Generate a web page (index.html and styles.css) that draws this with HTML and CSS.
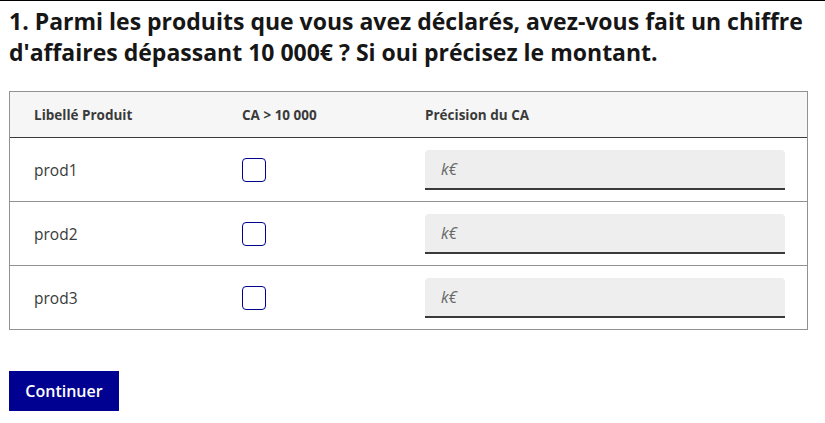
FILE: index.html
```html
<!DOCTYPE html>
<html lang="fr">
<head>
    <meta charset="UTF-8">
    <meta name="viewport" content="width=device-width, initial-scale=1.0">
    <title>Déclaration du chiffre d'affaires</title>
    <link rel="stylesheet" href="styles.css">
</head>
<body>
    <div class="page">
        <h1 class="question">1. Parmi les produits que vous avez déclarés, avez-vous fait un chiffre d'affaires dépassant 10 000€ ? Si oui précisez le montant.</h1>

        <div class="table-wrap">
            <table class="ca-table">
                <thead>
                    <tr>
                        <th class="col-name">Libellé Produit</th>
                        <th class="col-check">CA &gt; 10 000</th>
                        <th>Précision du CA</th>
                    </tr>
                </thead>
                <tbody>
                    <tr>
                        <td>prod1</td>
                        <td><input type="checkbox" class="check"></td>
                        <td><input type="text" class="amount" placeholder="k€"></td>
                    </tr>
                    <tr>
                        <td>prod2</td>
                        <td><input type="checkbox" class="check"></td>
                        <td><input type="text" class="amount" placeholder="k€"></td>
                    </tr>
                    <tr>
                        <td>prod3</td>
                        <td><input type="checkbox" class="check"></td>
                        <td><input type="text" class="amount" placeholder="k€"></td>
                    </tr>
                </tbody>
            </table>
        </div>

        <button type="submit" class="btn-primary">Continuer</button>
    </div>
</body>
</html>
```

FILE: styles.css
```css
body {
    margin: 0;
    padding: 0;
    font-family: 'Open Sans', 'Noto Sans', sans-serif;
    color: #161616;
    background: #fff;
    border-top: 1px solid #000;
}
.page {
    padding: 0 9px;
}
.question {
    font-family: 'Open Sans', sans-serif;
    font-weight: 700;
    font-size: 23px;
    line-height: 31px;
    margin: 5px 0 23px 0;
    max-width: 810px;
}
.table-wrap {
    width: 799px;
    border: 1px solid #929292;
    box-sizing: border-box;
}
.ca-table {
    width: 100%;
    border-collapse: collapse;
    table-layout: fixed;
}
.ca-table th {
    background-color: #f6f6f6;
    color: #3a3a3a;
    font-size: 13.5px;
    font-weight: 700;
    text-align: left;
    height: 45px;
    padding: 0 24px;
    border-bottom: 1px solid #3a3a3a;
}
.ca-table td {
    height: 63px;
    padding: 0 24px;
    font-size: 15.5px;
    color: #3a3a3a;
    border-bottom: 1px solid #929292;
}
.ca-table tbody tr:last-child td {
    border-bottom: none;
}
.col-name {
    width: 160px;
}
.col-check {
    width: 135px;
}
.check {
    appearance: none;
    -webkit-appearance: none;
    display: block;
    margin: 0;
    width: 24px;
    height: 24px;
    border: 1px solid #000091;
    border-radius: 4px;
    box-sizing: border-box;
    background: #fff;
}
.amount {
    display: block;
    width: 360px;
    height: 40px;
    box-sizing: border-box;
    margin: 0;
    padding: 0 16px;
    border: none;
    border-bottom: 2px solid #3a3a3a;
    border-radius: 4px 4px 0 0;
    background-color: #eeeeee;
    font-family: 'Open Sans', sans-serif;
    font-size: 15.5px;
    color: #161616;
}
.amount::placeholder {
    color: #666;
    font-style: italic;
}
.btn-primary {
    margin-top: 41px;
    height: 40px;
    width: 110px;
    padding: 0;
    border: none;
    background-color: #000091;
    color: #fff;
    font-family: 'Open Sans', sans-serif;
    font-size: 16px;
    font-weight: 600;
    cursor: pointer;
}
```
